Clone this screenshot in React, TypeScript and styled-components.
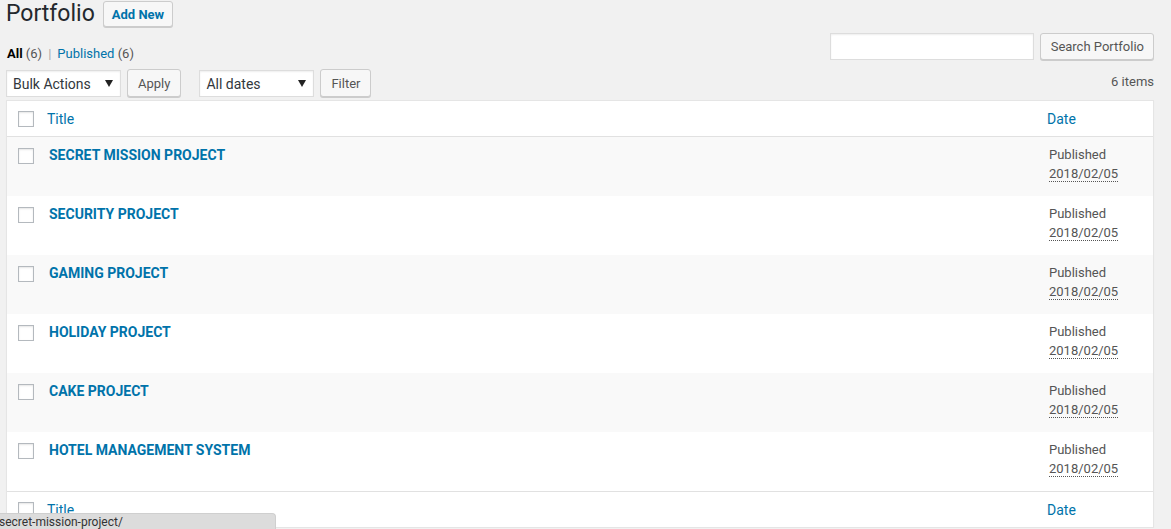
import React from 'react';
import styled, { createGlobalStyle } from 'styled-components';

const GlobalStyle = createGlobalStyle`
  html, body {
    margin: 0;
    padding: 0;
    background: #f1f1f1;
    font-family: Roboto, "Liberation Sans", Arial, sans-serif;
    font-size: 13px;
    color: #444;
    overflow: hidden;
  }
`;

const Wrap = styled.div`
  padding: 0 17px 0 6px;
`;

const HeadingRow = styled.div`
  display: flex;
  align-items: center;
  gap: 8px;
  height: 28px;
`;

const PageTitle = styled.h1`
  margin: 0;
  font-size: 23px;
  font-weight: 400;
  color: #23282d;
  line-height: 28px;
`;

const Button = styled.button<{ $primaryText?: boolean }>`
  display: inline-flex;
  align-items: center;
  height: ${(p) => (p.$primaryText ? '26px' : '28px')};
  padding: 0 ${(p) => (p.$primaryText ? '8px' : '10px')};
  background: #f7f7f7;
  border: 1px solid #ccc;
  border-radius: 3px;
  box-shadow: 0 1px 0 #ccc;
  color: ${(p) => (p.$primaryText ? '#0073aa' : '#555')};
  font-family: inherit;
  font-size: 13px;
  font-weight: ${(p) => (p.$primaryText ? 700 : 400)};
  box-sizing: border-box;
  white-space: nowrap;
  cursor: pointer;
`;

const SecondRow = styled.div`
  display: flex;
  justify-content: space-between;
  align-items: flex-start;
  margin-top: 5px;
  height: 36px;
`;

const Views = styled.div`
  margin-top: 8px;
  padding-left: 1px;
  line-height: 26px;
  color: #666;
`;

const ViewLink = styled.a<{ $current?: boolean }>`
  color: ${(p) => (p.$current ? '#000' : '#0073aa')};
  font-weight: ${(p) => (p.$current ? 700 : 400)};
  text-decoration: none;
`;

const Count = styled.span`
  color: #555;
  font-weight: 400;
`;

const Sep = styled.span`
  color: #aaa;
  margin: 0 6px;
`;

const SearchBox = styled.div`
  display: flex;
  gap: 6px;
`;

const SearchInput = styled.input`
  width: 204px;
  height: 27px;
  box-sizing: border-box;
  border: 1px solid #ddd;
  box-shadow: inset 0 1px 2px rgba(0, 0, 0, 0.07);
  background: #fff;
  outline: none;
`;

const SearchButton = styled(Button)`
  padding: 0 9px 0 10px;
  height: 27px;
`;

const TableNav = styled.div`
  display: flex;
  align-items: center;
  height: 28px;
`;

const Group = styled.div`
  display: flex;
  align-items: center;
  gap: 6px;
  margin-right: 18px;
`;

const Select = styled.div<{ $w: number }>`
  display: flex;
  align-items: center;
  justify-content: space-between;
  width: ${(p) => p.$w}px;
  height: 27px;
  box-sizing: border-box;
  padding: 1px 7px 0 6px;
  background: #fff;
  border: 1px solid #ddd;
  box-shadow: inset 0 1px 2px rgba(0, 0, 0, 0.07);
  color: #32373c;
  font-size: 14px;
`;

const Caret = () => (
  <svg width="8" height="7" viewBox="0 0 8 7">
    <path d="M0 0 L8 0 L4 7 Z" fill="#222" />
  </svg>
);

const ItemCount = styled.div`
  margin-left: auto;
  color: #555;
  margin-top: -3px;
`;

const Table = styled.div`
  margin-top: 3px;
  background: #fff;
  border: 1px solid #e5e5e5;
  box-shadow: 0 1px 1px rgba(0, 0, 0, 0.04);
`;

const Row = styled.div<{ $striped?: boolean; $head?: boolean; $foot?: boolean }>`
  display: grid;
  grid-template-columns: 40px 1fr 116px;
  height: ${(p) => (p.$head || p.$foot ? '35px' : '59px')};
  background: ${(p) => (p.$striped ? '#f9f9f9' : '#fff')};
  border-bottom: ${(p) => (p.$head ? '1px solid #e1e1e1' : 'none')};
  border-top: ${(p) => (p.$foot ? '1px solid #e1e1e1' : 'none')};
  align-items: ${(p) => (p.$head || p.$foot ? 'center' : 'start')};
`;

const Check = styled.span<{ $top?: number }>`
  display: block;
  width: 16px;
  height: 16px;
  box-sizing: border-box;
  margin-left: 11px;
  margin-top: ${(p) => p.$top ?? 0}px;
  border: 1px solid #b4b9be;
  background: #fff;
  box-shadow: inset 0 1px 2px rgba(0, 0, 0, 0.1);
`;

const HeadLink = styled.a<{ $pad?: number }>`
  color: #0073aa;
  font-size: 14px;
  text-decoration: none;
  padding-left: ${(p) => p.$pad ?? 0}px;
`;

const TitleLink = styled.a`
  display: block;
  padding: 9px 0 0 2px;
  color: #0073aa;
  font-size: 14px;
  font-weight: 700;
  text-transform: uppercase;
  text-decoration: none;
  line-height: 19px;
`;

const DateCell = styled.div`
  padding: 8px 0 0 12px;
  color: #555;
  font-size: 13px;
  line-height: 19px;
`;

const DateAbbr = styled.abbr`
  text-decoration: none;
  border-bottom: 1px dotted #555;
`;

const StatusBar = styled.div`
  position: fixed;
  left: 0;
  bottom: 0;
  width: 276px;
  height: 16px;
  box-sizing: border-box;
  background: #dcdcdc;
  border-top-right-radius: 4px;
  border: 1px solid #cfcfcf;
  border-left: none;
  border-bottom: none;
  color: #333;
  font-size: 12px;
  line-height: 16px;
  white-space: nowrap;
  overflow: hidden;
  text-indent: -1px;
`;

const projects = [
  'Secret Mission Project',
  'Security Project',
  'Gaming Project',
  'Holiday Project',
  'Cake Project',
  'Hotel Management System',
];

const App: React.FC = () => (
  <>
    <GlobalStyle />
    <Wrap>
      <HeadingRow>
        <PageTitle>Portfolio</PageTitle>
        <Button $primaryText>Add New</Button>
      </HeadingRow>
      <SecondRow>
        <Views>
          <ViewLink $current href="#">
            All <Count>(6)</Count>
          </ViewLink>
          <Sep>|</Sep>
          <ViewLink href="#">
            Published <Count>(6)</Count>
          </ViewLink>
        </Views>
        <SearchBox>
          <SearchInput type="search" />
          <SearchButton>Search Portfolio</SearchButton>
        </SearchBox>
      </SecondRow>
      <TableNav>
        <Group>
          <Select $w={115}>
            Bulk Actions
            <Caret />
          </Select>
          <Button>Apply</Button>
        </Group>
        <Group>
          <Select $w={115}>
            All dates
            <Caret />
          </Select>
          <Button>Filter</Button>
        </Group>
        <ItemCount>6 items</ItemCount>
      </TableNav>
      <Table>
        <Row $head>
          <Check />
          <HeadLink href="#">Title</HeadLink>
          <HeadLink href="#" $pad={10}>
            Date
          </HeadLink>
        </Row>
        {projects.map((name, i) => (
          <Row key={name} $striped={i % 2 === 0}>
            <Check $top={11} />
            <TitleLink href="#">{name}</TitleLink>
            <DateCell>
              Published
              <br />
              <DateAbbr title="2018/02/05">2018/02/05</DateAbbr>
            </DateCell>
          </Row>
        ))}
        <Row $foot>
          <Check />
          <HeadLink href="#">Title</HeadLink>
          <HeadLink href="#" $pad={10}>
            Date
          </HeadLink>
        </Row>
      </Table>
    </Wrap>
    <StatusBar>secret-mission-project/</StatusBar>
  </>
);

export default App;
